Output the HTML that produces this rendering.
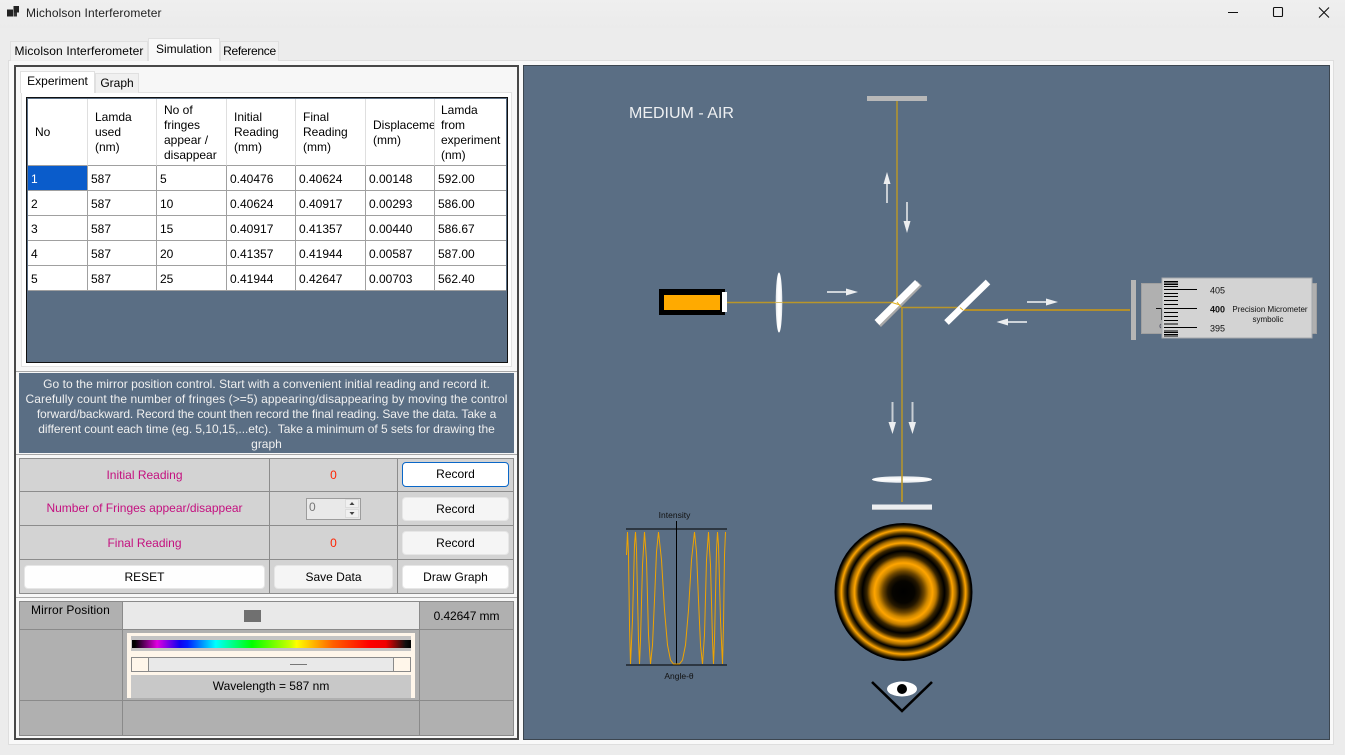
<!DOCTYPE html>
<html><head><meta charset="utf-8"><title>Micholson Interferometer</title>
<style>
html,body{margin:0;padding:0}
body{width:1345px;height:755px;overflow:hidden;position:relative;background:#ececec;font:12px/15px "Liberation Sans",sans-serif;color:#000}
.a{position:absolute;box-sizing:border-box}
.c{display:flex;align-items:center;justify-content:center;text-align:center;white-space:nowrap}
.tab{position:absolute;box-sizing:border-box;border:1px solid #e0e0e0;border-bottom:0;background:#f0f0f0;white-space:nowrap;text-align:center}
.btn{border:1px solid #e6e6e6;border-radius:4px;background:#f5f5f5}
.w{background:#fefefe}
.m{color:#c4107f}
.r{color:#ff2200}
table{border-collapse:separate;border-spacing:0;table-layout:fixed;position:absolute;left:28px;top:99px;width:478px;background:#fff}
td{box-sizing:border-box;padding:2px 0 0 3px;border-right:1px solid #a0a0a0;border-bottom:1px solid #a0a0a0;height:25px;overflow:hidden;white-space:nowrap;background:#fff;line-height:15px}
tr.h td{height:67px;padding:1px 0 0 7px;border-right:1px solid #dfdfdf;border-bottom:1px solid #a0a0a0}
td.s{background:#0a5ccb;color:#fff}
</style></head><body>

<div class="a" style="left:0;top:0;width:1345px;height:28px;background:linear-gradient(#efefef,#ebebeb)"></div>
<svg class="a" style="left:0;top:0" width="24" height="22"><rect x="7" y="9.500" width="6" height="7" fill="#222"/><rect x="13.500" y="6" width="5.500" height="6.500" fill="#222"/><rect x="13.500" y="12.500" width="3.500" height="4" fill="#333"/></svg>
<div class="a" style="left:26px;top:6px;white-space:nowrap;letter-spacing:.12px;color:#222">Micholson Interferometer</div>
<svg class="a" style="left:1220px;top:0" width="125" height="26" fill="none" stroke="#111">
<path d="M8 12.500H18"/><rect x="53.500" y="7.500" width="9" height="9" stroke-width="1.100" rx="1"/><path d="M99 7.500L109 17.500M109 7.500L99 17.500" stroke-width="1.100"/></svg>

<!-- tab page -->
<div class="a" style="left:8px;top:60px;width:1326px;height:685px;background:#f9f9f9;border:1px solid #dedede"></div>
<div class="tab" style="left:10px;top:41px;width:138px;height:20px;line-height:19px;letter-spacing:.13px">Micolson Interferometer</div>
<div class="tab" style="left:148px;top:38px;width:72px;height:23px;background:#f9f9f9;line-height:20px">Simulation</div>
<div class="tab" style="left:220px;top:41px;width:59px;height:20px;line-height:19px;letter-spacing:-.3px">Reference</div>

<!-- left panel -->
<div class="a" style="left:14px;top:65px;width:505px;height:675px;background:#f7f7f7;border:2px solid #484848"></div>
<div class="a" style="left:16px;top:371px;width:501px;height:1px;background:#a8a8a8"></div>
<div class="a" style="left:16px;top:454px;width:501px;height:1px;background:#a8a8a8"></div>
<div class="a" style="left:16px;top:597px;width:501px;height:1px;background:#a8a8a8"></div>

<div class="a" style="left:21px;top:92px;width:491px;height:275px;background:#fff;border:1px solid #e3e3e3"></div>
<div class="tab" style="left:20px;top:71px;width:75px;height:22px;background:#fff;line-height:19px">Experiment</div>
<div class="tab" style="left:95px;top:73px;width:44px;height:20px;line-height:19px">Graph</div>

<!-- data grid -->
<div class="a" style="left:26px;top:97px;width:481.500px;height:265.500px;background:#5a6e84;border:1.500px solid #111"></div>
<table>
<colgroup><col style="width:60px"><col style="width:69px"><col style="width:70px"><col style="width:69px"><col style="width:70px"><col style="width:69px"><col style="width:71px"></colgroup>
<tr class="h"><td>No</td><td>Lamda<br>used<br>(nm)</td><td>No of<br>fringes<br>appear /<br>disappear</td><td>Initial<br>Reading<br>(mm)</td><td>Final<br>Reading<br>(mm)</td><td>Displacement<br>(mm)</td><td style="padding-left:6px;border-right:0">Lamda<br>from<br>experiment<br>(nm)</td></tr>
<tr><td class="s">1</td><td>587</td><td>5</td><td>0.40476</td><td>0.40624</td><td>0.00148</td><td style="border-right:0">592.00</td></tr>
<tr><td>2</td><td>587</td><td>10</td><td>0.40624</td><td>0.40917</td><td>0.00293</td><td style="border-right:0">586.00</td></tr>
<tr><td>3</td><td>587</td><td>15</td><td>0.40917</td><td>0.41357</td><td>0.00440</td><td style="border-right:0">586.67</td></tr>
<tr><td>4</td><td>587</td><td>20</td><td>0.41357</td><td>0.41944</td><td>0.00587</td><td style="border-right:0">587.00</td></tr>
<tr><td>5</td><td>587</td><td>25</td><td>0.41944</td><td>0.42647</td><td>0.00703</td><td style="border-right:0">562.40</td></tr>
</table>

<!-- instructions -->
<div class="a" style="left:19px;top:373px;width:495px;height:80px;background:#5a6e84;color:#f0f0f0;text-align:center;white-space:nowrap;padding-top:3.500px"><span style="letter-spacing:.035px">Go to the mirror position control. Start with a convenient initial reading and record it.</span><br><span style="letter-spacing:.08px">Carefully count the number of fringes (&gt;=5) appearing/disappearing by moving the control</span><br><span style="letter-spacing:-.1px">forward/backward. Record the count then record the final reading. Save the data. Take a</span><br><span style="letter-spacing:-.045px">different count each time (eg. 5,10,15,...etc).&nbsp; Take a minimum of 5 sets for drawing the</span><br>graph</div>

<!-- controls grid -->
<div class="a" style="left:19px;top:458px;width:495px;height:136px;background:#d3d3d3;border:1px solid #8c8c8c"></div>
<div class="a" style="left:269px;top:458px;width:1px;height:136px;background:#8c8c8c"></div>
<div class="a" style="left:397px;top:458px;width:1px;height:136px;background:#8c8c8c"></div>
<div class="a" style="left:19px;top:491px;width:495px;height:1px;background:#8c8c8c"></div>
<div class="a" style="left:19px;top:525px;width:495px;height:1px;background:#8c8c8c"></div>
<div class="a" style="left:19px;top:559px;width:495px;height:1px;background:#8c8c8c"></div>
<div class="a c m" style="left:20px;top:459px;width:249px;height:32px">Initial Reading</div>
<div class="a c m" style="left:20px;top:492px;width:249px;height:33px">Number of Fringes appear/disappear</div>
<div class="a c m" style="left:20px;top:527px;width:249px;height:32px">Final Reading</div>
<div class="a c r" style="left:270px;top:459px;width:127px;height:32px">0</div>
<div class="a c r" style="left:270px;top:527px;width:127px;height:32px">0</div>
<div class="a" style="left:306px;top:498px;width:55px;height:22px;background:#e9e9e9;border:1px solid #9c9c9c;padding:0 0 0 2px;line-height:16px;color:#777">0</div>
<div class="a" style="left:345px;top:499px;width:14px;height:9px;background:#f0f0f0;border:1px solid #dcdcdc"></div>
<div class="a" style="left:345px;top:509px;width:14px;height:9px;background:#f0f0f0;border:1px solid #dcdcdc"></div>
<svg class="a" style="left:345px;top:499px" width="14" height="20" fill="#444"><path d="M4.500 6L7 3L9.500 6Z"/><path d="M4.500 13L7 16L9.500 13Z"/></svg>
<div class="a c" style="left:402px;top:462px;width:107px;height:25px;background:#fff;border:1.500px solid #0a67c8;border-radius:4px">Record</div>
<div class="a c btn" style="left:402px;top:497px;width:107px;height:24px">Record</div>
<div class="a c btn" style="left:402px;top:531px;width:107px;height:24px">Record</div>
<div class="a c btn w" style="left:24px;top:565px;width:241px;height:24px">RESET</div>
<div class="a c btn" style="left:274px;top:565px;width:119px;height:24px">Save Data</div>
<div class="a c btn w" style="left:402px;top:565px;width:107px;height:24px">Draw Graph</div>

<!-- mirror position -->
<div class="a" style="left:19px;top:601px;width:495px;height:135px;background:#b0b0b0;border:1px solid #8a8a8a"></div>
<div class="a" style="left:123px;top:602px;width:296px;height:27px;background:#e9e9e9"></div>
<div class="a" style="left:122px;top:601px;width:1px;height:135px;background:#8a8a8a"></div>
<div class="a" style="left:419px;top:601px;width:1px;height:135px;background:#8a8a8a"></div>
<div class="a" style="left:19px;top:629px;width:495px;height:1px;background:#8a8a8a"></div>
<div class="a" style="left:19px;top:700px;width:495px;height:1px;background:#8a8a8a"></div>
<div class="a" style="left:31px;top:603px;white-space:nowrap;letter-spacing:.1px">Mirror Position</div>
<div class="a" style="left:244px;top:610px;width:17px;height:12px;background:#707070"></div>
<div class="a c" style="left:420px;top:602px;width:93px;height:28px;letter-spacing:-.1px">0.42647 mm</div>
<div class="a" style="left:127px;top:633px;width:288px;height:65px;background:#fff6ea"></div>
<div class="a" style="left:131px;top:636px;width:280px;height:15px;background:#c4c4c4"></div>
<div class="a" style="left:131.500px;top:640px;width:279px;height:7.500px;background:linear-gradient(90deg,#000 0,#000 1%,#e000e0 9%,#1000f0 17%,#0020ff 20%,#00ffff 30%,#00ff00 43%,#d0ff00 57%,#ffff00 59%,#ff6000 72%,#ff0000 85%,#f00000 91%,#101010 98%,#000 100%)"></div>
<div class="a" style="left:131px;top:657px;width:280px;height:15px;background:#e9e9e9;border:1px solid #8a8a8a"></div>
<div class="a" style="left:131px;top:657px;width:18px;height:15px;background:#fff6ea;border:1px solid #8a8a8a"></div>
<div class="a" style="left:393px;top:657px;width:18px;height:15px;background:#fff6ea;border:1px solid #8a8a8a"></div>
<div class="a" style="left:290px;top:664px;width:17px;height:1px;background:#777"></div>
<div class="a c" style="left:131px;top:675px;width:280px;height:23px;background:#c8c8c8">Wavelength = 587 nm</div>

<!-- simulation panel -->
<svg class="a" style="left:523px;top:65px" width="808" height="676" viewBox="523 65 808 676">
<defs>
<radialGradient id="fr" gradientUnits="userSpaceOnUse" cx="903.500" cy="592" r="69">
<stop offset="0" stop-color="#000"/><stop offset=".16" stop-color="#060400"/><stop offset=".23" stop-color="#241700"/><stop offset=".3" stop-color="#6e4700"/><stop offset=".365" stop-color="#cf8800"/><stop offset=".42" stop-color="#ffa500"/><stop offset=".475" stop-color="#bf7b00"/><stop offset=".53" stop-color="#3a2600"/><stop offset=".594" stop-color="#000"/><stop offset=".65" stop-color="#3c2700"/><stop offset=".71" stop-color="#ffa500"/><stop offset=".76" stop-color="#a06800"/><stop offset=".812" stop-color="#000"/><stop offset=".855" stop-color="#604000"/><stop offset=".9" stop-color="#ffa500"/><stop offset=".945" stop-color="#604000"/><stop offset=".98" stop-color="#000"/><stop offset="1" stop-color="#000"/>
</radialGradient>
<linearGradient id="ln" x1="0" x2="1" y1="0" y2="0"><stop offset="0" stop-color="#dfe3e7"/><stop offset=".35" stop-color="#fff"/><stop offset=".65" stop-color="#fff"/><stop offset="1" stop-color="#dfe3e7"/></linearGradient>
<linearGradient id="ln2" x1="0" x2="0" y1="0" y2="1"><stop offset="0" stop-color="#e4e8ec"/><stop offset=".5" stop-color="#fff"/><stop offset="1" stop-color="#e4e8ec"/></linearGradient>
</defs>
<rect x="523.500" y="65.500" width="806" height="674" fill="#5a6e84" stroke="#3c4650"/>
<text x="629" y="118" font-family="Liberation Sans" font-size="16" fill="#eef0f2">MEDIUM - AIR</text>

<!-- beams -->
<g fill="none" stroke="#b8962a" stroke-width="1.500">
<path d="M897 101V302"/><path d="M727 302.500H895"/><path d="M902 307V502"/><path d="M901 307.500H960"/>
</g>
<path d="M962 310H1130" stroke="#d09a10" stroke-width="1.500"/>

<!-- top mirror -->
<rect x="867" y="96" width="60" height="5" fill="#b8b8b8"/>
<!-- source -->
<rect x="659" y="289" width="66" height="26" fill="#000"/><rect x="664" y="295" width="56" height="15" fill="#ffaa00"/><rect x="722" y="292" width="5" height="20" fill="#fff"/>
<!-- lens 1 -->
<ellipse cx="779" cy="302.500" rx="3.300" ry="30" fill="url(#ln)"/>
<path d="M776 302.500H782" stroke="#d8c070"/>
<!-- splitter -->
<path d="M878.500 324.500L919.500 283.500" stroke="#a8a8a8" stroke-width="7"/>
<path d="M877 322.500L917.500 282.500" stroke="#fff" stroke-width="7"/>
<path d="M892 302.500L900 305M897 302L901 307" stroke="#e0b020" fill="none"/>
<!-- compensator -->
<path d="M946.500 322.500L988 282" stroke="#fff" stroke-width="6.500"/>
<path d="M960 307.500L963 310" stroke="#e0b020" fill="none"/>

<!-- arrows -->
<g fill="#eceef0" stroke="none">
<path d="M827 291H847V293H827Z" fill="#cdd3d9"/><path d="M846 288.500L858 292L846 295.500Z"/>
<path d="M1027 301H1047V303H1027Z" fill="#cdd3d9"/><path d="M1046 298.500L1058 302L1046 305.500Z"/>
<path d="M1007 321H1027V323H1007Z" fill="#cdd3d9"/><path d="M1008 318.500L996.500 322L1008 325.500Z"/>
<path d="M886 183H888V203H886Z" fill="#c8ced4"/><path d="M883.500 184L887 172L890.500 184Z"/>
<path d="M906 202H908V222H906Z" fill="#c8ced4"/><path d="M903.500 221L907 233L910.500 221Z"/>
<path d="M891.500 402H893.500V423H891.500Z" fill="#c8ced4"/><path d="M888.500 422L892.500 434L896 422Z"/>
<path d="M911.500 402H913.500V423H911.500Z" fill="#c8ced4"/><path d="M908.500 422L912.500 434L916 422Z"/>
</g>

<!-- micrometer -->
<rect x="1131" y="280" width="5" height="60" fill="#b5b5b5"/>
<rect x="1141.500" y="283.500" width="175" height="50" fill="#b0b0b0" stroke="#a0a0a0"/>
<path d="M1156 308.500H1164M1161.500 309V320" stroke="#111" fill="none"/>
<path d="M1161 324C1159.500 325 1159.500 327 1161 328" stroke="#556" fill="none"/>
<rect x="1162" y="278" width="150" height="60" fill="#d3d3d3" stroke="#a5a8ac"/>
<g stroke="#000" stroke-width="1.100" fill="none">
<path d="M1164 281.500H1178M1164 283H1178M1164 284.500H1178M1164 286.500H1178M1164 293.500H1178M1164 296.500H1178M1164 300.500H1178M1164 304.500H1178M1164 312.500H1178M1164 316.500H1178M1164 320.500H1178M1164 324H1178M1164 331H1178M1164 332.500H1178M1164 334.500H1178M1164 336H1178"/>
<path d="M1164 289.500H1197M1164 308.500H1197M1164 327.500H1197"/>
</g>
<g font-family="Liberation Sans" fill="#111" font-size="9">
<text x="1210" y="293.500">405</text><text x="1210" y="312.500" font-weight="bold">400</text><text x="1210" y="331.500">395</text>
<text x="1270" y="312" font-size="8" text-anchor="middle">Precision Micrometer</text>
<text x="1268" y="322" font-size="8" text-anchor="middle">symbolic</text>
</g>

<!-- lower optics -->
<ellipse cx="902" cy="479.500" rx="30" ry="3.300" fill="url(#ln2)"/>
<path d="M902 470V502" stroke="#b8962a" stroke-width="1.500"/>
<rect x="872" y="504.500" width="60" height="5.500" fill="#eceef0"/><rect x="872" y="509" width="60" height="1" fill="#c0c4c8"/>
<circle cx="903.500" cy="592" r="69" fill="url(#fr)"/>
<path d="M872 682L902 711L932 682" fill="none" stroke="#000" stroke-width="2.600"/>
<ellipse cx="902" cy="689" rx="15" ry="7.500" fill="#fff"/><circle cx="902" cy="689" r="5" fill="#000"/>

<!-- graph -->
<path d="M676.500 521V665M626 529H727M626 665H727" stroke="#000" stroke-width="1" fill="none"/>
<polyline fill="none" stroke="#f0a400" stroke-width="1" points="626.500,555 627.500,532 628.500,555 629.500,625 630.500,664 632.500,620 634.500,545 635.500,532 636.500,550 638.500,640 639.500,664 640.500,640 642.500,565 644.500,532 646.500,560 648.500,635 650.500,664 652.500,645 654.500,600 656.500,552 658.500,532 661.500,560 664.500,610 667.500,645 670.500,660 673.500,664 676.500,664 679.500,664 682.500,660 685.500,645 688.500,610 691.500,560 694.500,532 696.500,552 698.500,600 700.500,645 702.500,664 704.500,635 706.500,560 708.500,532 710.500,565 712.500,640 713.500,664 714.500,640 716.500,550 717.500,532 718.500,545 720.500,620 722.500,664 723.500,625 724.500,555 725.500,532"/>
<g font-family="Liberation Sans, DejaVu Sans, sans-serif" font-size="8.500" fill="#111" text-anchor="middle">
<text x="674.500" y="518">Intensity</text><text x="679" y="679">Angle-θ</text></g>
</svg>
</body></html>
